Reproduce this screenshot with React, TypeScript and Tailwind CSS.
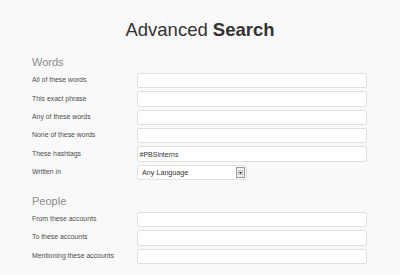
import React from "react";

const Row = ({ label, children }: { label: string; children?: React.ReactNode }) => (
  <div className="flex items-center h-[15.4px]">
    <div className="w-[105px] text-[6.9px] leading-none text-[#4d4d4d]">{label}</div>
    {children ?? <div className="w-[230px] h-full bg-white border border-[#e0e0e0] rounded-[2px]" />}
  </div>
);

export default function App() {
  return (
    <div
      className="w-[400px] h-[275px] bg-[#f9f9f9] overflow-hidden"
      style={{ fontFamily: '"Liberation Sans", Arial, sans-serif' }}
    >
      <div className="pt-[20.8px] text-center text-[18.5px] leading-[18px] text-[#333]">
        Advanced <span className="font-bold">Search</span>
      </div>
      <div className="pl-[32px]">
        <div className="mt-[18.2px] text-[11px] leading-none text-[#8a8a8a]">Words</div>
        <div className="mt-[4.9px] flex flex-col gap-[3px]">
          <Row label="All of these words" />
          <Row label="This exact phrase" />
          <Row label="Any of these words" />
          <Row label="None of these words" />
          <Row label="These hashtags">
            <div className="w-[230px] h-full bg-white border border-[#e0e0e0] rounded-[2px] flex items-center pl-[1.5px] text-[7px] leading-none text-[#333]">
              #PBSinterns
            </div>
          </Row>
          <Row label="Written in">
            <div className="w-[110px] h-full bg-white border border-[#e0e0e0] rounded-[2px] flex items-center justify-between pl-[4px] pr-[1.5px] text-[7.2px] leading-none text-[#333]">
              <span>Any Language</span>
              <div className="w-[9px] h-[11px] border border-[#9a9a9a] bg-[#f2f2f2] flex items-center justify-center">
                <div className="w-[5px] h-[5px] border border-[#c4c4c4] flex items-center justify-center">
                  <svg width="3" height="2" viewBox="0 0 3 2">
                    <path d="M0 0H3L1.5 2Z" fill="#222" />
                  </svg>
                </div>
              </div>
            </div>
          </Row>
        </div>
        <div className="mt-[16px] text-[11px] leading-none text-[#8a8a8a]">People</div>
        <div className="mt-[4.6px] flex flex-col gap-[3px]">
          <Row label="From these accounts" />
          <Row label="To these accounts" />
          <Row label="Mentioning these accounts" />
        </div>
      </div>
    </div>
  );
}
